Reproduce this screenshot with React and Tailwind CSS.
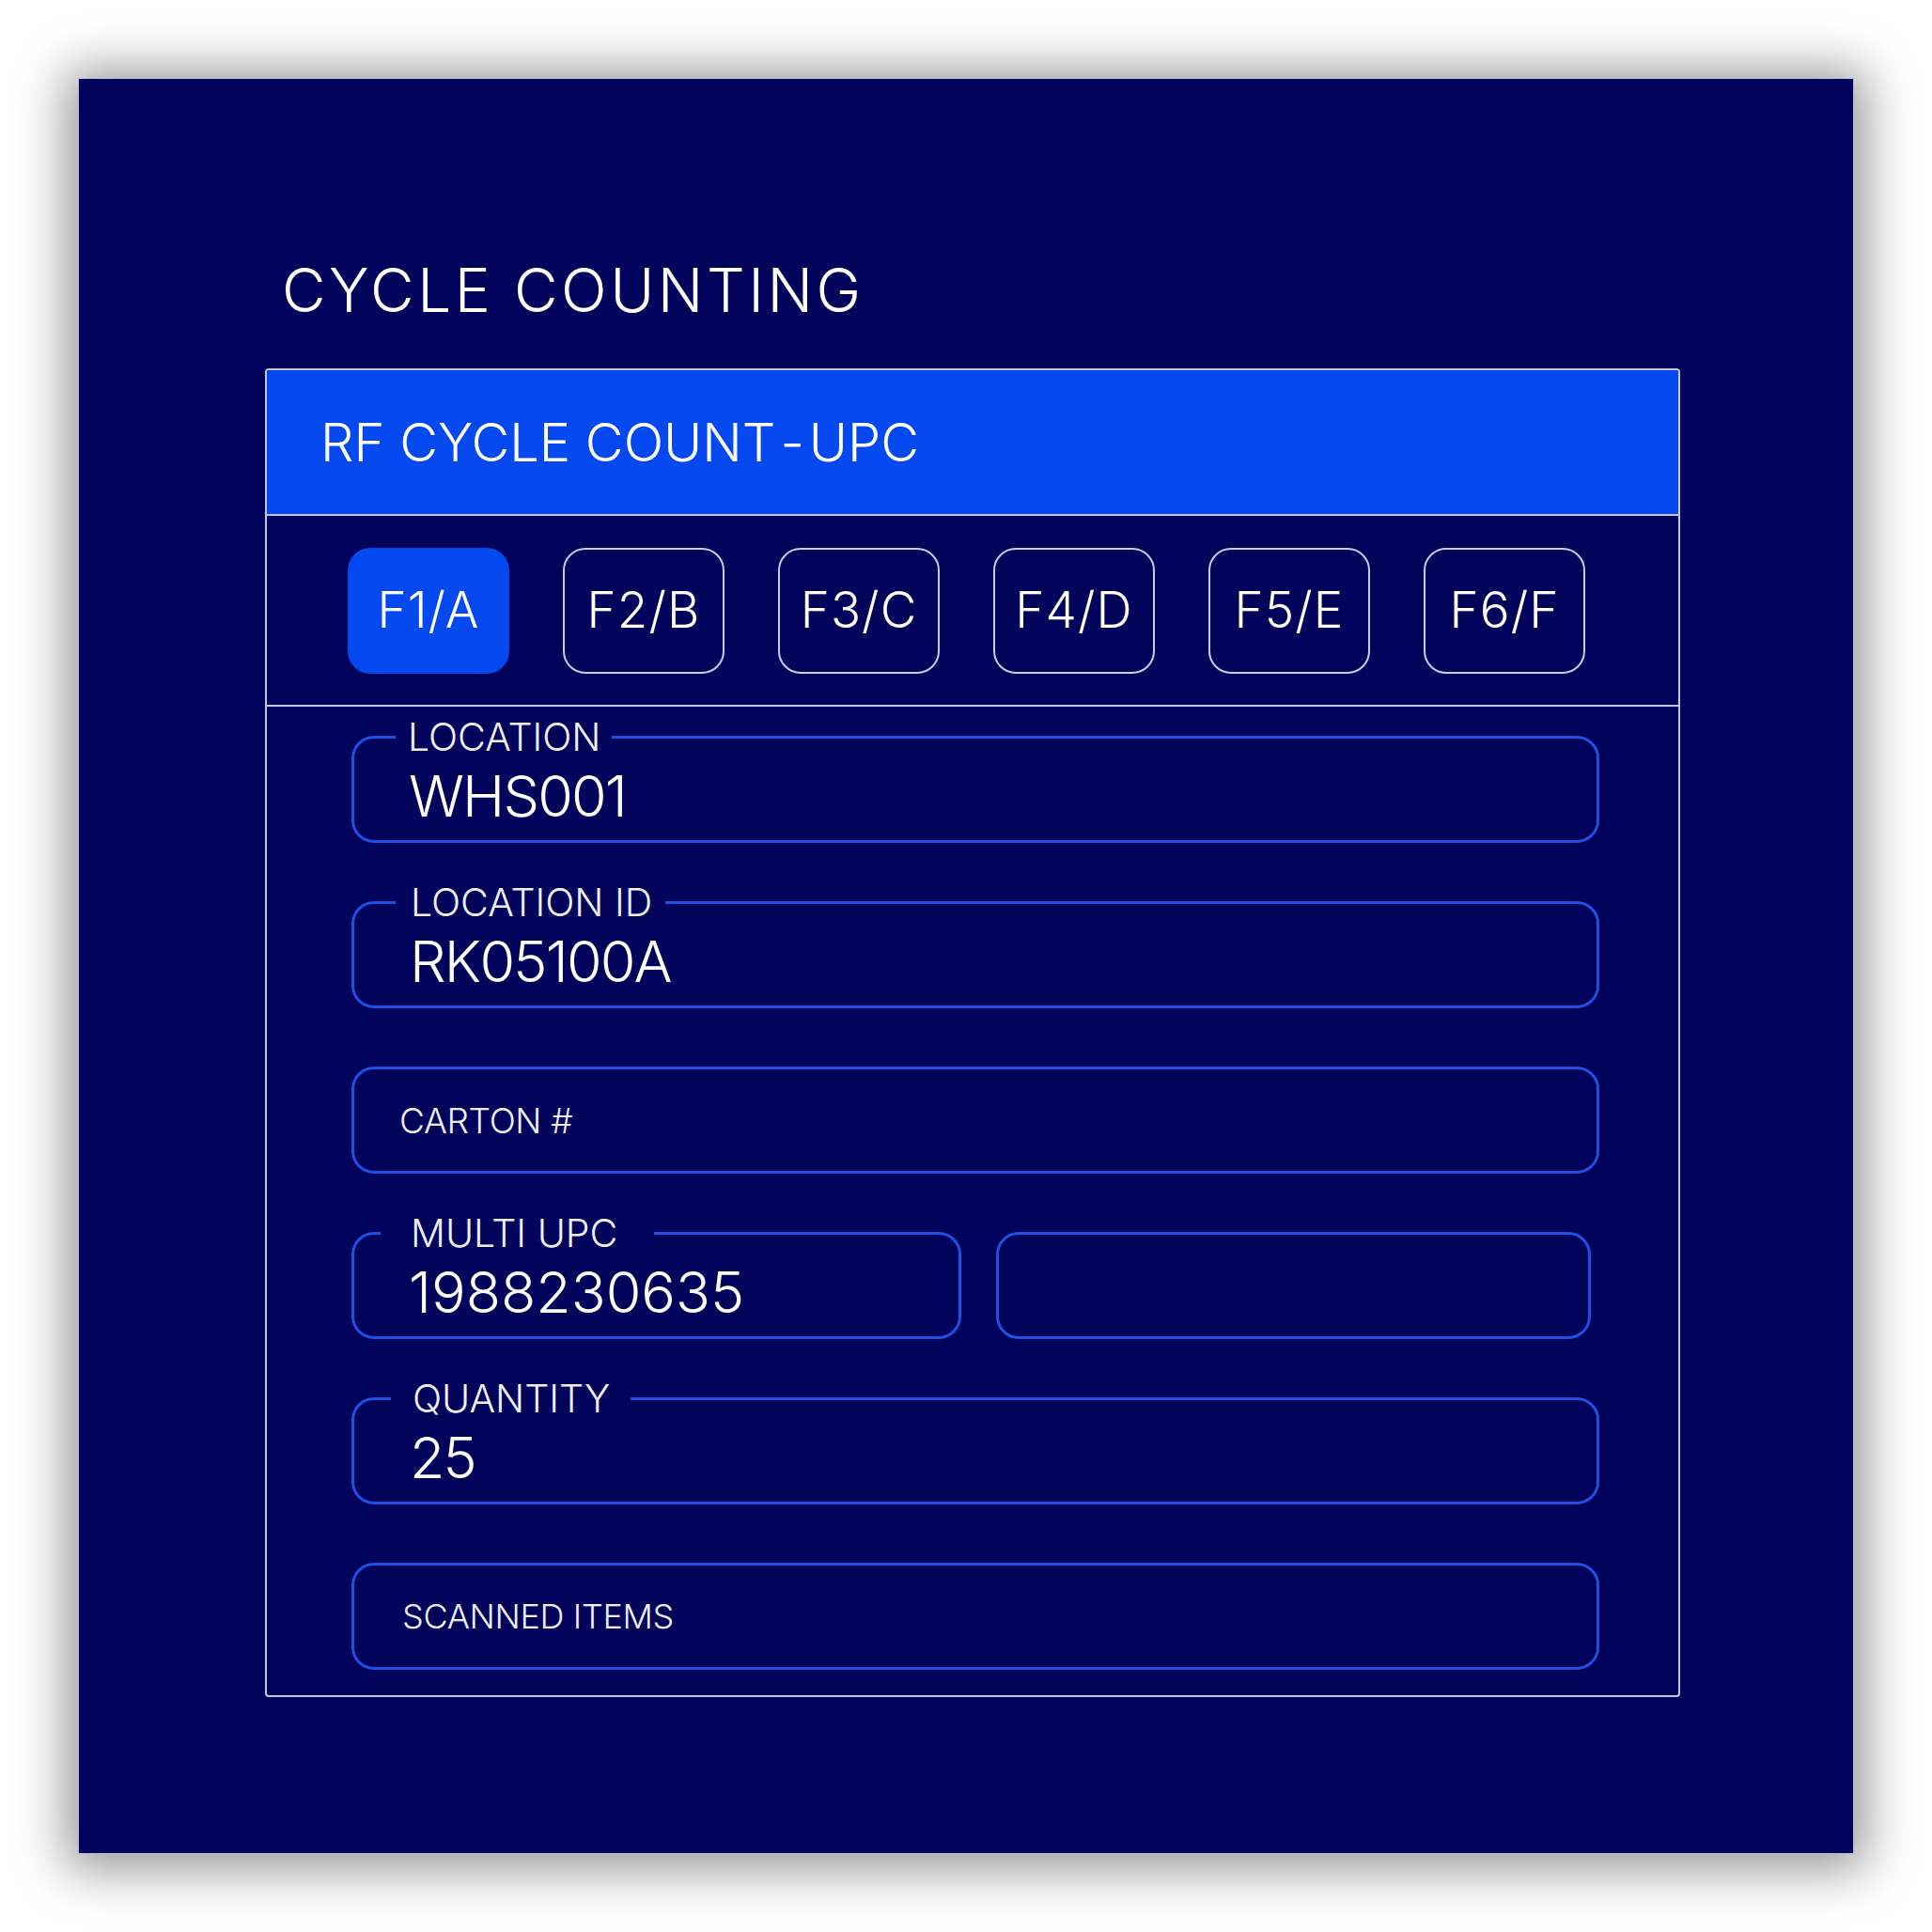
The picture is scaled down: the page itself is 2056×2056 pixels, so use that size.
import React from 'react';

const FONT = { fontFamily: 'Inter, "Noto Sans", "Liberation Sans", sans-serif' };

const KEYS = ['F1/A', 'F2/B', 'F3/C', 'F4/D', 'F5/E', 'F6/F'];

const LegendField = ({ label, value, width = 'w-full', ml, pl, pr, vml, track = 'tracking-[-0.03em]' }) => (
  <fieldset className={`${width} h-[133px] rounded-[24px] border-[3px] border-[#1f50e2] pl-0 pr-0 pt-[12px] m-0`}>
    <legend
      className="text-[41px] leading-none font-light text-[#eef0ff]"
      style={{ marginLeft: ml, paddingLeft: pl, paddingRight: pr }}
    >
      {label}
    </legend>
    <div className={`text-[61px] leading-none font-light ${track} text-white`} style={{ marginLeft: vml }}>
      {value}
    </div>
  </fieldset>
);

const PlainField = ({ label, width = 'w-full', pl = 'pl-[48px]', size = 'text-[36px]' }) => (
  <div className={`${width} mt-[19px] h-[114px] rounded-[24px] border-[3px] border-[#1f50e2] flex items-center ${pl}`}>
    {label && <span className={`${size} leading-none font-light tracking-[-0.01em] text-[#eef0ff]`}>{label}</span>}
  </div>
);

const App = () => {
  return (
    <div className="w-[2056px] h-[2056px] bg-white p-[83px]" style={FONT}>
      <div className="w-[1890px] h-[1890px] bg-[#01025a] border border-[#b9bbd6] shadow-[0_4px_50px_12px_rgba(0,0,0,0.42)] pt-[193px]">
        <h1 className="ml-[216px] text-[64px] leading-none font-light tracking-[0.055em] text-white">
          CYCLE COUNTING
        </h1>

        <div className="ml-[198px] mt-[51px] w-[1506px] rounded-[4px] border-2 border-[#c3c6ee] overflow-hidden">
          <div className="h-[155px] bg-[#0349ef] flex items-center pl-[57px] border-b-2 border-[#c3c6ee]">
            <span className="text-[56px] leading-none font-light text-white">
              RF CYCLE COUNT<span className="mx-[5px]">-</span>UPC
            </span>
          </div>

          <div className="h-[203px] flex items-center gap-[57px] pl-[86px] border-b-2 border-[#c3c6ee]">
            {KEYS.map((k, i) => (
              <div
                key={k}
                className={
                  i === 0
                    ? 'w-[172px] h-[134px] rounded-[24px] bg-[#0349ef] flex items-center justify-center'
                    : 'w-[172px] h-[134px] rounded-[24px] border-2 border-[#c8cbf2] flex items-center justify-center'
                }
              >
                <span className="text-[53px] leading-none font-light tracking-[0.02em] text-white">{k}</span>
              </div>
            ))}
          </div>

          <div className="pl-[90px] pr-[84px] pt-[12px] pb-[27px] flex flex-col gap-[43px]">
            <LegendField label="LOCATION" value="WHS001" ml={44} pl={13} pr={12} vml={58} />
            <LegendField label="LOCATION ID" value="RK05100A" ml={44} pl={16} pr={14} vml={59} />
            <PlainField label="CARTON #" size="text-[37px]" />
            <div className="flex gap-[37px]">
              <LegendField
                label="MULTI UPC"
                value="1988230635"
                width="w-[649px]"
                ml={28}
                pl={32}
                pr={39}
                vml={58}
                track="tracking-normal"
              />
              <PlainField width="w-[633px]" />
            </div>
            <LegendField label="QUANTITY" value="25" ml={39} pl={23} pr={22} vml={59} />
            <PlainField label="SCANNED ITEMS" pl="pl-[51px]" />
          </div>
        </div>
      </div>
    </div>
  );
};

export default App;
